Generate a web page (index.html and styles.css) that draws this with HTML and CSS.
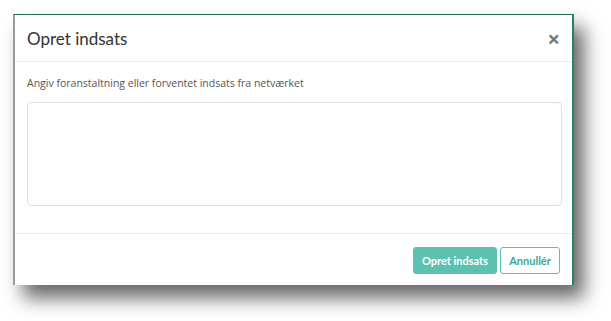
FILE: index.html
```html
<!DOCTYPE html>
<html lang="da">
<head>
    <meta charset="UTF-8">
    <title>Opret indsats</title>
    <link rel="stylesheet" href="styles.css">
</head>
<body>
    <div class="shot">
        <div class="frame">
            <div class="modal-content">
                <div class="modal-header">
                    <h3>Opret indsats</h3>
                    <span class="close">&times;</span>
                </div>
                <div class="modal-body">
                    <label for="indsats">Angiv foranstaltning eller forventet indsats fra netværket</label>
                    <textarea id="indsats"></textarea>
                </div>
                <div class="modal-footer">
                    <button class="btn btn-primary">Opret indsats</button>
                    <button class="btn btn-outline">Annullér</button>
                </div>
            </div>
        </div>
    </div>
</body>
</html>
```

FILE: styles.css
```css
body {
    margin: 0;
    background: #fff;
    font-family: "Open Sans", sans-serif;
}

.shot {
    padding: 14px 0 36px 13px;
}

.frame {
    width: 561px;
    height: 271px;
    box-sizing: border-box;
    border-top: 1px solid #1f6e5e;
    border-left: 2px solid #9a9a9a;
    border-right: 2px solid #2a7f6c;
    background: #fff;
    box-shadow: 10px 13px 18px rgba(0, 0, 0, 0.6);
}

.modal-content {
    display: flex;
    flex-direction: column;
    height: 100%;
}

.modal-header {
    display: flex;
    justify-content: space-between;
    align-items: center;
    height: 46px;
    padding: 0 12px 0 12px;
    border-bottom: 1px solid #eceeef;
}

.modal-header h3 {
    margin: 0;
    font-family: "Lato", sans-serif;
    font-size: 17px;
    font-weight: 400;
    color: #333;
}

.close {
    color: #777;
    font-size: 22px;
    font-weight: bold;
    line-height: 1;
    cursor: pointer;
}

.modal-body {
    display: flex;
    flex-direction: column;
    padding: 14px 12px 0 12px;
    height: 172px;
    box-sizing: border-box;
    border-bottom: 1px solid #eceeef;
}

.modal-body label {
    font-size: 10.5px;
    color: #555;
    margin-bottom: 12px;
}

.modal-body textarea {
    width: 535px;
    height: 104px;
    box-sizing: border-box;
    border: 1px solid #dcdfe3;
    border-radius: 4px;
    resize: none;
}

.modal-footer {
    display: flex;
    justify-content: flex-end;
    gap: 3px;
    padding: 13px 12px 0 0;
}

.btn {
    height: 27px;
    padding: 0;
    box-sizing: border-box;
    border-radius: 3px;
    font-family: "Lato", sans-serif;
    font-size: 11px;
    font-weight: 700;
    white-space: nowrap;
    cursor: pointer;
}

.btn-primary {
    width: 84px;
    background-color: #5bc2b2;
    border: 1px solid #5bc2b2;
    color: #fff;
}

.btn-outline {
    width: 60px;
    background-color: #fff;
    border: 1px solid #5bc2b2;
    color: #3aa797;
}
```
